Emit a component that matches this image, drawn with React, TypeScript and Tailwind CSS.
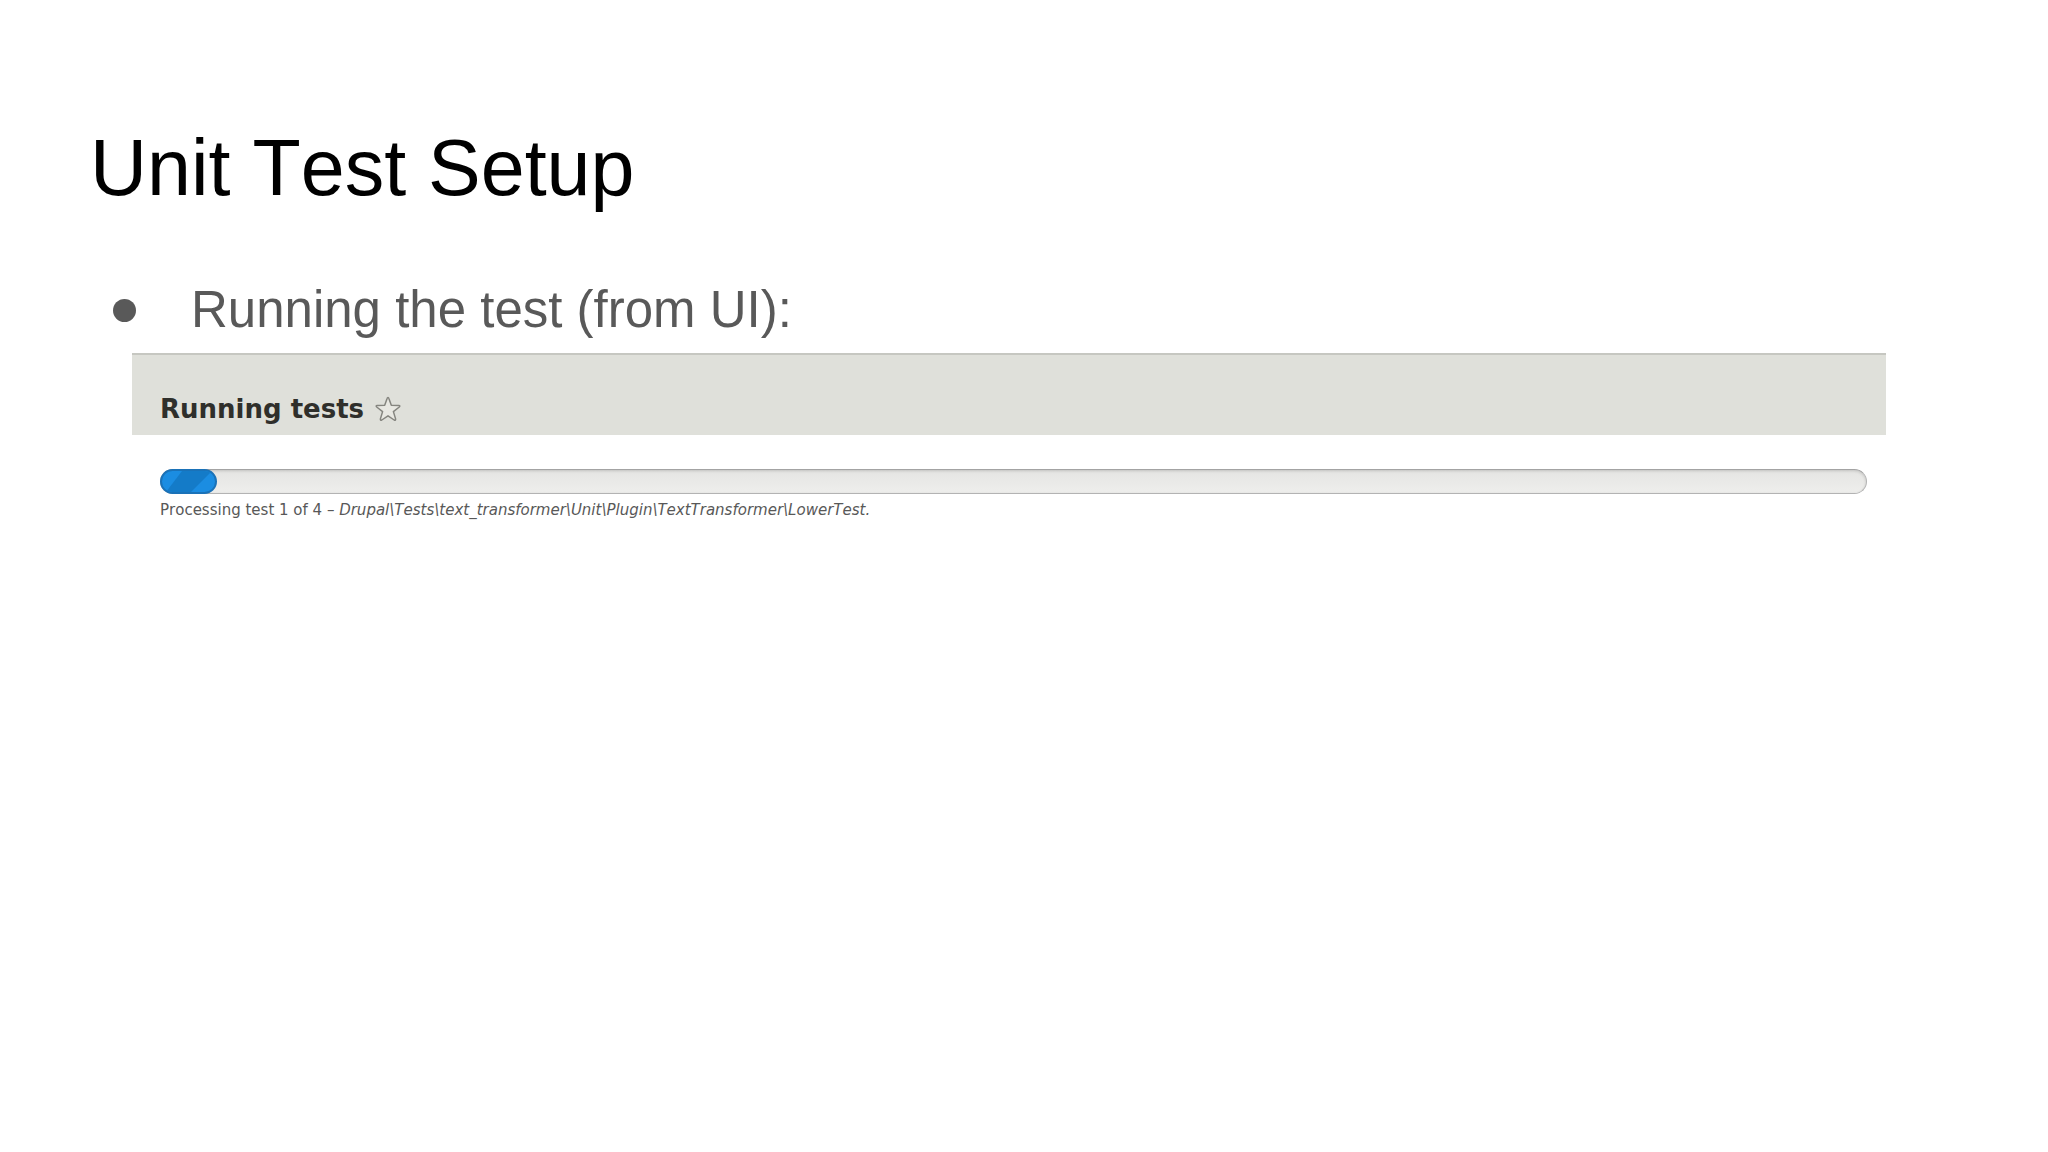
function StarIcon() {
  return (
    <svg viewBox="0 0 26 26" className="size-[26px]" fill="#e8e8e2" stroke="#85857f" strokeWidth="1.5" strokeLinejoin="round" aria-hidden="true">
      <path d="M13 1.4 Q13.6 1.4 13.9 2.4 L16.3 9.3 L23.8 9.5 Q25.6 9.8 24.3 11 L18.4 15.6 L20.6 22.9 Q20.8 24.8 19.2 24 L13 19.8 L6.8 24 Q5.2 24.8 5.4 22.9 L7.6 15.6 L1.7 11 Q.4 9.8 2.2 9.5 L9.7 9.3 L12.1 2.4 Q12.4 1.4 13 1.4 Z" />
    </svg>
  );
}

function ProgressBar({ label }: { label: string }) {
  return (
    <div
      role="progressbar"
      aria-label={label}
      aria-valuemin={0}
      aria-valuemax={4}
      aria-valuenow={0}
      className="h-[25px] rounded-full border border-[#b3b3b3] border-t-[#a3a3a3] bg-linear-to-b from-[#e5e5e3] to-[#eeeeec] shadow-[inset_0_1px_3px_rgba(0,0,0,0.16)]"
    >
      <div className="-mt-px -ml-px h-[25px] w-[57px] overflow-hidden rounded-full border-2 border-[#1a72b8] bg-[#1b8de2]">
        <svg viewBox="0 0 53 21" className="h-full w-full" preserveAspectRatio="none" aria-hidden="true">
          <path d="M20 0 H50 L29 21 H4 Z" fill="#147bc8" />
        </svg>
      </div>
    </div>
  );
}

export default function App() {
  return (
    <main className="min-h-screen bg-white pt-[120px] pr-[162px] pl-[90px] font-['Liberation_Sans',Arial,sans-serif] [font-kerning:none]">
      <h1 className="text-[79px] leading-[96px] text-black">Unit Test Setup</h1>
      <ul className="mt-[64px] pl-[23px]">
        <li className="flex items-center text-[51px] leading-[60px] text-[#595959]">
          <span className="mr-[55px] size-[23px] rounded-full bg-[#595959]" />
          Running the test (from UI):
        </li>
      </ul>
      <section className="mt-[13px] ml-[42px] font-['DejaVu_Sans','Noto_Sans',sans-serif]">
        <header className="flex h-[82px] items-end gap-[11px] border-t-2 border-[#c6c7c1] bg-[#dfe0da] px-7 pb-[13px]">
          <h2 className="text-[26px] leading-[26px] font-bold text-[#2f2f2b]">Running tests</h2>
          <button type="button" aria-label="Add to shortcuts">
            <StarIcon />
          </button>
        </header>
        <div className="pt-[34px] pr-[19px] pl-7">
          <ProgressBar label="Running tests" />
          <p className="mt-1 text-[15px] leading-6 text-[#585858]">
            Processing test 1 of 4 – <em>Drupal\Tests\text_transformer\Unit\Plugin\TextTransformer\LowerTest.</em>
          </p>
        </div>
      </section>
    </main>
  );
}
